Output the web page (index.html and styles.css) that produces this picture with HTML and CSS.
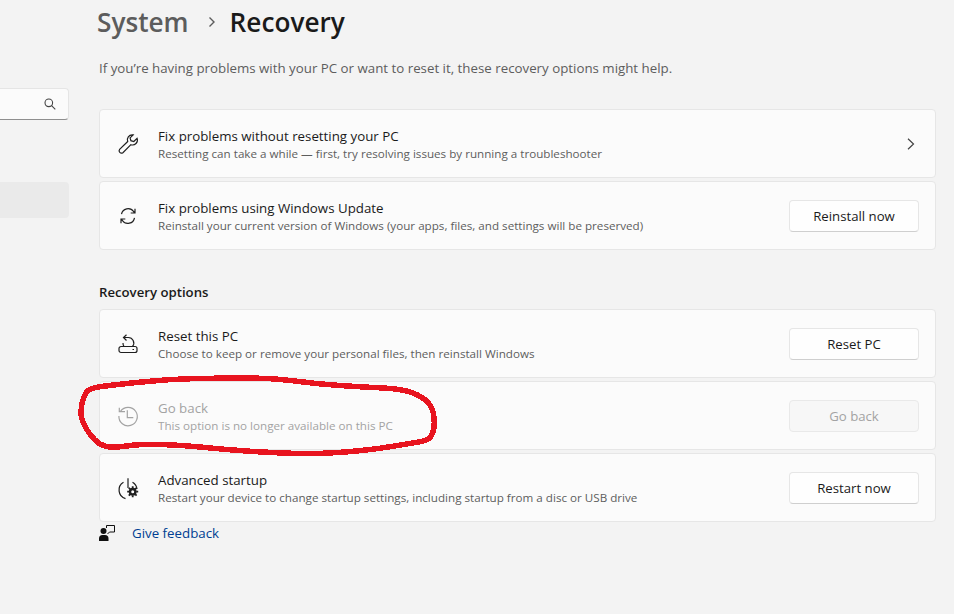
FILE: index.html
```html
<!DOCTYPE html>
<html lang="en">
<head>
<meta charset="utf-8">
<title>System - Recovery</title>
<link rel="stylesheet" href="styles.css">
</head>
<body>
<div class="page">
  <aside class="sidebar">
    <div class="search">
      <svg class="search-icon" viewBox="0 0 12 12"><circle cx="4.8" cy="4.8" r="3.8"/><path d="M7.6 7.6 11.3 11.3"/></svg>
    </div>
    <div class="nav-selected"></div>
  </aside>
  <main class="content">
    <h1 class="title">
      <span class="crumb">System</span>
      <svg class="crumb-sep" viewBox="0 0 10 12"><path d="M2.5 1.5 7 6 2.5 10.500"/></svg>
      <span class="current">Recovery</span>
    </h1>
    <p class="intro">If you’re having problems with your PC or want to reset it, these recovery options might help.</p>

    <section class="group">
      <div class="card">
        <svg class="icon" viewBox="0 0 20 20"><path d="M14.600.8a4.900 4.900 0 0 0-4.900 6.700L1.600 15.300a2.400 2.400 0 0 0 3.300 3.400l8-8a4.900 4.900 0 0 0 6.200-6.300l-3.300 3.100-2.900-.8-.8-2.800 3.100-3a5 5 0 0 0-.6-.1z"/></svg>
        <div class="text">
          <div class="name">Fix problems without resetting your PC</div>
          <div class="desc">Resetting can take a while — first, try resolving issues by running a troubleshooter</div>
        </div>
        <svg class="chevron" viewBox="0 0 10 12"><path d="M2 .8 7.500 6 2 11.200"/></svg>
      </div>
      <div class="card">
        <svg class="icon" viewBox="0 0 20 20"><path d="M3.500 8.200A6.700 6.700 0 0 1 15.600 5.500L17 7M17 2.700V7h-4.300M16.500 11.800A6.700 6.700 0 0 1 4.400 14.500L3 13M3 17.300V13h4.300"/></svg>
        <div class="text">
          <div class="name">Fix problems using Windows Update</div>
          <div class="desc">Reinstall your current version of Windows (your apps, files, and settings will be preserved)</div>
        </div>
        <button class="btn">Reinstall now</button>
      </div>
    </section>

    <h2 class="group-title">Recovery options</h2>

    <section class="group">
      <div class="card">
        <svg class="icon" viewBox="0 0 20 20"><path d="M3 12.500h14a2 2 0 0 1 2 2v2a2 2 0 0 1-2 2H3a2 2 0 0 1-2-2v-2a2 2 0 0 1 2-2zM14.500 15.500h1.500M6 3.500h4a5.500 5.500 0 0 1 4.500 9M5 9a5.500 5.500 0 0 0 1 3.500M8.500.8 5.500 3.500l3 3"/></svg>
        <div class="text">
          <div class="name">Reset this PC</div>
          <div class="desc">Choose to keep or remove your personal files, then reinstall Windows</div>
        </div>
        <button class="btn">Reset PC</button>
      </div>
      <div class="card disabled">
        <svg class="icon" viewBox="0 0 20 20"><path d="M1.300 1.700v3.900H7M2.600 5.200A9.200 9.200 0 1 1 .9 10M9.300 4.300v7.400h6"/></svg>
        <div class="text">
          <div class="name">Go back</div>
          <div class="desc">This option is no longer available on this PC</div>
        </div>
        <button class="btn" disabled>Go back</button>
      </div>
      <div class="card">
        <svg class="icon" viewBox="0 0 20 20"><path d="M5.500 4.200A9 9 0 0 0 7.500 20.600M14.500 4.200A9 9 0 0 1 19 11M10 .2V10"/><circle class="gear-hub" cx="14.700" cy="13.700" r="2.700"/><path class="gear-teeth" d="M14.700 8.200v2M14.700 17.200v2M9.200 13.700h2M18.200 13.700h2M10.800 9.800l1.400 1.400M17.200 16.200l1.400 1.400M10.800 17.600l1.400-1.400M17.200 11.200l1.400-1.400"/></svg>
        <div class="text">
          <div class="name">Advanced startup</div>
          <div class="desc">Restart your device to change startup settings, including startup from a disc or USB drive</div>
        </div>
        <button class="btn">Restart now</button>
      </div>
    </section>

    <div class="feedback">
      <svg class="feedback-icon" viewBox="0 0 16 16"><circle class="solid" cx="4.500" cy="6" r="3"/><path class="solid" d="M0 16v-2.500A3.500 3.500 0 0 1 3.500 10h2.500a3.500 3.500 0 0 1 3.500 3.500V16z"/><path class="bubble" d="M7.500 3V.5h8v6.500H10.500L8.500 9"/></svg>
      <a class="feedback-link" href="#">Give feedback</a>
    </div>
  </main>
</div>
<svg class="scribble" viewBox="0 0 954 614">
  <path d="M82 403.500Q84 395 87 391.500Q90 388 101.500 386.500Q113 385 141.500 382Q170 379 196.500 378.500Q223 378 248 378Q273 378 295 381Q317 384 340 385.500Q363 387 383 388Q403 389 413 393Q423 397 428 402.500Q433 408 434 417.500Q435 427 432.500 433.500Q430 440 421.500 441.500Q413 443 391.500 446.500Q370 450 345 452Q320 454 298.500 453.500Q277 453 253.500 451.500Q230 450 205 447.500Q180 445 160 444.500Q140 444 126.500 446Q113 448 106.500 446.500Q100 445 95 440Q90 435 86.500 429Q83 423 81.500 417.500Q80.500 412 82 403.500Z"/>
</svg>
</body>
</html>
```
FILE: styles.css
```css
* { box-sizing: border-box; }
html, body { margin: 0; height: 100%; overflow: hidden; }
body {
  background: #f3f3f3;
  color: #1a1a1a;
  font-family: "Open Sans", "Noto Sans", sans-serif;
}
.page { display: flex; height: 614px; }
.sidebar { width: 69px; flex: none; padding-top: 88px; }
.search {
  height: 32px;
  width: 69px;
  background: #fbfbfb;
  border: 1px solid #e5e5e5;
  border-left: 0;
  border-bottom-color: #8f8f8f;
  border-radius: 0 4px 4px 0;
  display: flex;
  align-items: center;
  justify-content: flex-end;
  padding-right: 12px;
}
.search-icon { width: 12px; height: 12px; fill: none; stroke: #444; stroke-width: 1.1; }
.nav-selected { margin-top: 62px; height: 36px; background: #eaeaea; border-radius: 0 4px 4px 0; }
.content { flex: 1; padding: 0 18px 0 30px; min-width: 0; }
.title {
  margin: 0 0 0 -2px;
  height: 44px;
  display: flex;
  align-items: center;
  font-size: 26.2px;
  font-weight: 600;
  line-height: 44px;
}
.crumb { color: #5c5c5c; }
.crumb-sep { width: 10px; height: 12px; margin: 0 13px 0 18px; fill: none; stroke: #5c5c5c; stroke-width: 1.4; }
.current { color: #1a1a1a; }
.intro { margin: 15px 0 0; font-size: 13.3px; line-height: 18px; color: #5d5d5d; height: 18px; }
.group { display: flex; flex-direction: column; gap: 3px; }
.intro + .group { margin-top: 32px; }
.card {
  height: 69px;
  display: flex;
  align-items: center;
  background: #fbfbfb;
  border: 1px solid #e6e6e6;
  border-radius: 4px;
  padding: 0 16px 0 18px;
}
.icon {
  width: 20px;
  height: 20px;
  flex: none;
  margin-right: 20px;
  fill: none;
  stroke: #1f1f1f;
  stroke-width: 1.2;
  overflow: visible;
}
.text { flex: 1; min-width: 0; padding-top: 2px; }
.name { font-size: 13.3px; line-height: 18px; color: #1a1a1a; }
.desc { font-size: 11.65px; line-height: 18px; color: #5d5d5d; }
.chevron { width: 10px; height: 12px; margin-right: 3px; fill: none; stroke: #444; stroke-width: 1.2; }
.btn {
  width: 130px;
  height: 32px;
  font: 13.2px "Open Sans", "Noto Sans", sans-serif;
  color: #1a1a1a;
  background: #fefefe;
  border: 1px solid #e6e6e6;
  border-bottom-color: #cfcfcf;
  border-radius: 4px;
  padding: 0;
}
.btn:disabled { background: #f7f7f7; color: #a3a3a3; border-color: #e9e9e9; }
.disabled .icon { stroke: #a3a3a3; }
.disabled .name, .disabled .desc { color: #a3a3a3; }
.gear-hub { stroke-width: 2.4; }
.gear-teeth { stroke-width: 1.8; }
.group-title { margin: 33px 0 8px; font-size: 13.2px; line-height: 18px; font-weight: 600; color: #1a1a1a; }
.feedback { display: flex; align-items: center; gap: 17px; height: 20px; margin-top: 1px; }
.feedback-icon { width: 16px; height: 16px; flex: none; overflow: visible; }
.solid { fill: #111; }
.bubble { fill: none; stroke: #111; stroke-width: 1; }
.feedback-link { font-size: 13.3px; color: #003e92; text-decoration: none; }
.scribble { position: absolute; left: 0; top: 0; width: 954px; height: 614px; fill: none; stroke: #e8141f; stroke-width: 5.5; stroke-linejoin: round; shape-rendering: crispEdges; }
```
